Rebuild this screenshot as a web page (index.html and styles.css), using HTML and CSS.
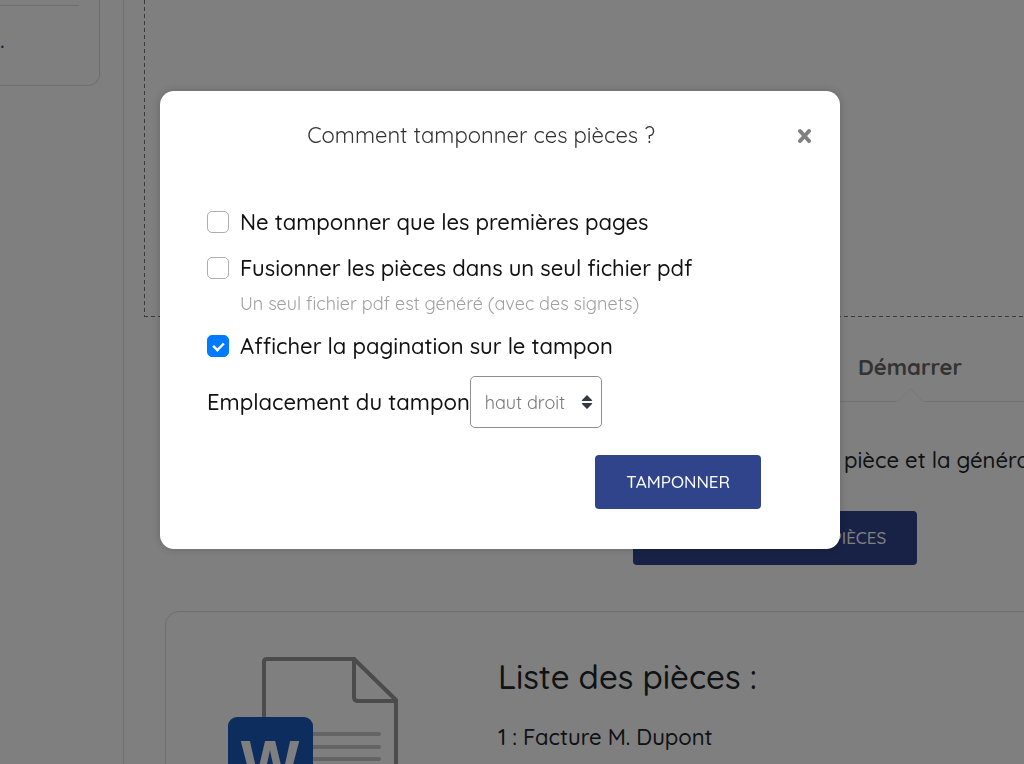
FILE: index.html
```html
<!DOCTYPE html>
<html lang="fr">
<head>
    <meta charset="utf-8">
    <meta name="viewport" content="width=device-width, initial-scale=1.0">
    <title>Tamponner des pièces</title>
    <link rel="stylesheet" href="styles.css">
</head>
<body>

<div class="page">
    <aside class="sidebar">
        <div class="side-card">
            <hr>
            <a href="#">.</a>
        </div>
    </aside>

    <main class="content">
        <div class="dropzone"></div>

        <nav class="tabs">
            <a href="#">Pièces</a>
            <a href="#" class="active">Démarrer</a>
        </nav>

        <p class="intro">Cliquez ici pour lancer le tamponnage de chaque pièce et la génération du bordereau</p>
        <button type="button" class="btn">TAMPONNER CES 20 PIÈCES</button>

        <section class="list-card">
            <svg class="word-icon" width="172" height="160" viewBox="0 0 172 160">
                <g fill="none" stroke="#969696" stroke-width="4" stroke-linejoin="round" stroke-linecap="round">
                    <path d="M36 150V6q0-3 3-3h87l42 41v106z"/>
                    <path d="M126 3v38q0 4 4 4h38"/>
                </g>
                <g stroke="#c8c8c8" stroke-width="4" stroke-linecap="round">
                    <path d="M80 78h71M80 91h71M80 103h71M80 116h71"/>
                </g>
                <rect y="61" width="85" height="85" rx="9" fill="#185abd"/>
                <text class="word-letter" x="42" y="127" text-anchor="middle">W</text>
            </svg>
            <div class="list">
                <h2>Liste des pièces :</h2>
                <p>1 : Facture M. Dupont</p>
            </div>
        </section>
    </main>
</div>

<div class="overlay">
    <form class="modal" role="dialog" aria-labelledby="modal-title">
        <header class="modal-header">
            <h1 id="modal-title">Comment tamponner ces pièces ?</h1>
            <button type="button" class="close" aria-label="Fermer">
                <svg width="15" height="16" viewBox="0 0 15 16">
                    <path d="M3 4l9 10M12 4L3 14" stroke="#808080" stroke-width="4" stroke-linecap="round"/>
                </svg>
            </button>
        </header>

        <div class="option">
            <input type="checkbox" id="first-pages">
            <label for="first-pages">Ne tamponner que les premières pages</label>
        </div>
        <div class="option">
            <input type="checkbox" id="merge">
            <label for="merge">Fusionner les pièces dans un seul fichier pdf</label>
        </div>
        <p class="hint">Un seul fichier pdf est généré (avec des signets)</p>
        <div class="option">
            <input type="checkbox" id="pagination" checked>
            <label for="pagination">Afficher la pagination sur le tampon</label>
        </div>

        <div class="position">
            <label for="position">Emplacement du tampon</label>
            <div class="select-box">
                <select id="position">
                    <option>haut droit</option>
                    <option>haut gauche</option>
                    <option>bas droit</option>
                    <option>bas gauche</option>
                </select>
                <svg width="12" height="14" viewBox="0 0 12 14">
                    <path d="M6 0l5 5q1 1-1 1H2Q0 6 1 5zM6 14l5-5q1-1-1-1H2Q0 8 1 9z" fill="#343a40"/>
                </svg>
            </div>
        </div>

        <div class="actions">
            <button type="submit" class="btn">TAMPONNER</button>
        </div>
    </form>
</div>

</body>
</html>
```

FILE: styles.css
```css
* {
    box-sizing: border-box;
}

body {
    margin: 0;
    height: 100vh;
    overflow: hidden;
    background: #fff;
    color: #212529;
    font-family: Quicksand, Lato, sans-serif;
    font-size: 22px;
    font-weight: 500;
    line-height: 32px;
}

h1, h2, p {
    margin: 0;
    font-weight: 500;
}

a {
    color: inherit;
    text-decoration: none;
}

.page {
    display: flex;
}

/* sidebar */
.sidebar {
    flex: 0 0 124px;
    min-height: 100vh;
    padding-right: 23px;
    border-right: 1px solid #e0e0e0;
}
.side-card {
    height: 86px;
    padding: 5px 20px 0 0;
    border: 1px solid #dcdcdc;
    border-width: 0 1px 1px 0;
    border-radius: 0 0 12px 0;
}
.side-card hr {
    margin: 0 0 18px;
    border: 0;
    border-top: 1px solid #dcdcdc;
}
.side-card a {
    display: block;
    color: #30448c;
}

/* main column, wider than small windows */
.content {
    flex: 1 0 1302px;
    padding: 0 20px;
    text-align: center;
}
.dropzone {
    height: 317px;
    background:
        repeating-linear-gradient(to bottom, #777 0 4px, transparent 4px 7px) left / 1px 100% no-repeat,
        repeating-linear-gradient(to bottom, #777 0 4px, transparent 4px 7px) right / 1px 100% no-repeat,
        repeating-linear-gradient(to right, #777 0 4px, transparent 4px 7px) bottom / 100% 1px no-repeat;
}
.tabs {
    display: flex;
    justify-content: center;
    margin: 0 20px;
    padding: 34px 0 18px;
    border-bottom: 1px solid #e6e6e6;
}
.tabs a {
    position: relative;
    width: 270px;
    color: #666;
    font-weight: 700;
}
.tabs .active::after {
    content: "";
    position: absolute;
    left: 50%;
    bottom: -28px;
    width: 18px;
    height: 18px;
    margin-left: -9px;
    border: 1px solid #f4f4f4;
    border-width: 1px 0 0 1px;
    background: #fff;
    transform: rotate(45deg);
}
.intro {
    padding: 42px 0 35px;
}

.btn {
    height: 54px;
    padding: 0 31px 1px;
    border: 0;
    border-radius: 4px;
    background: #30448c;
    color: #fff;
    font-family: inherit;
    font-size: 17px;
    font-weight: 500;
    cursor: pointer;
}

.list-card {
    display: flex;
    gap: 98px;
    margin: 46px 21px 0;
    padding: 44px 62px;
    border: 1px solid #dcdcdc;
    border-radius: 14px;
    text-align: left;
}
.list h2 {
    margin-bottom: 23px;
    font-size: 33px;
    line-height: 42px;
}
.word-letter {
    fill: #fff;
    font-family: "Liberation Sans", Arial, sans-serif;
    font-size: 62px;
    font-weight: 700;
}

/* modal */
.overlay {
    position: fixed;
    inset: 0;
    padding: 91px 24px 0 0;
    background: rgba(0, 0, 0, 0.5);
}
.modal {
    max-width: 680px;
    margin: 0 auto;
    padding: 28px 28px 40px 47px;
    border-radius: 14px;
    background: #fff;
    box-shadow: 0 0 10px rgba(0, 0, 0, 0.2);
    color: #111;
}
.modal-header {
    display: flex;
    align-items: center;
    margin-bottom: 55px;
}
.modal-header h1 {
    flex: 1;
    color: #333;
    font-size: 22px;
    font-weight: 400;
    text-align: center;
}
.close {
    display: flex;
    justify-content: flex-end;
    width: 57px;
    padding: 0;
    border: 0;
    background: none;
    cursor: pointer;
}
.option {
    display: flex;
    align-items: center;
    gap: 11px;
    margin-bottom: 14px;
}
.option input {
    appearance: none;
    width: 22px;
    height: 22px;
    margin: 0;
    border: 1px solid #adadad;
    border-radius: 5px;
    background: #fff;
}
.option input:checked {
    display: flex;
    align-items: center;
    justify-content: center;
    border-color: #007bff;
    background: #007bff;
}
.option input:checked::before {
    content: "";
    width: 10px;
    height: 6px;
    margin-bottom: 2px;
    border: solid #fff;
    border-width: 0 0 3px 3px;
    transform: rotate(-45deg) scale(0.8);
}
.hint {
    margin: -6px 0 14px 33px;
    color: #a0a0a0;
    font-size: 18px;
    font-weight: 400;
    line-height: 24px;
}
.position {
    display: flex;
    align-items: center;
    margin-bottom: 27px;
}
.select-box {
    display: flex;
    align-items: center;
    position: relative;
}
.select-box select {
    appearance: none;
    width: 132px;
    height: 52px;
    padding: 0 14px;
    border: 1px solid #8f8f8f;
    border-radius: 5px;
    background: #fff;
    color: #777;
    font-family: inherit;
    font-size: 18px;
    font-weight: 400;
}
.select-box svg {
    position: absolute;
    right: 9px;
    pointer-events: none;
}
.actions {
    padding-right: 51px;
    text-align: right;
}
```
